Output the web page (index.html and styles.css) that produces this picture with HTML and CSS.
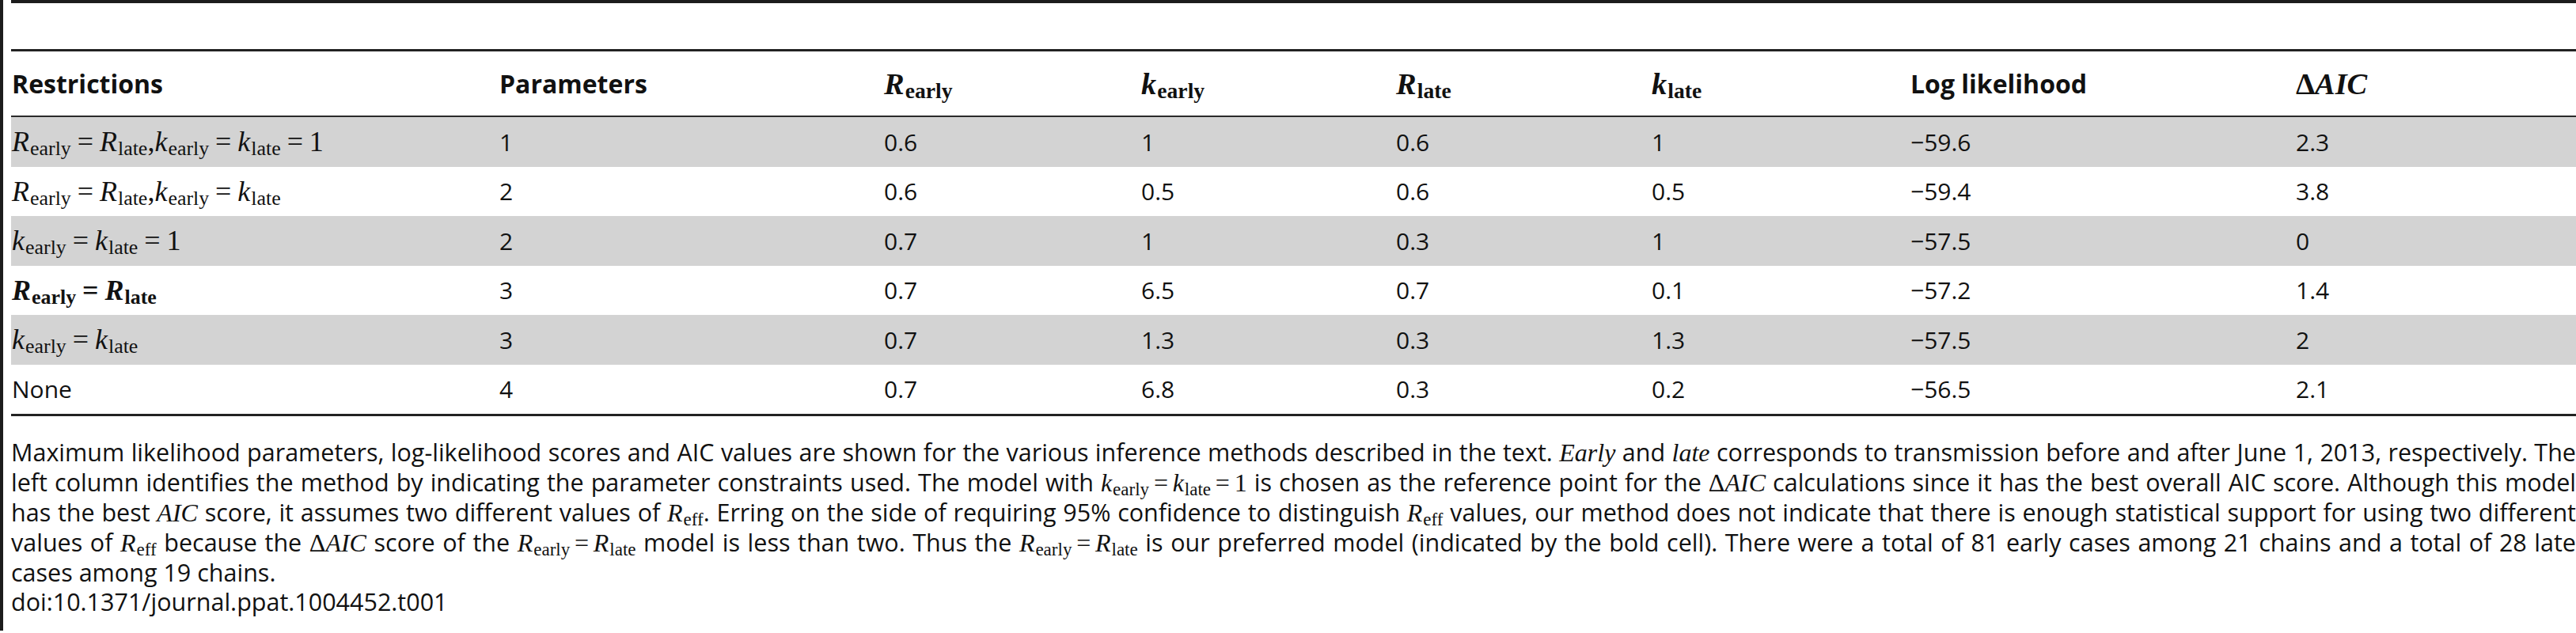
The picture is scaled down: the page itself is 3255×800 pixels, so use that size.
FILE: index.html
```html
<!DOCTYPE html>
<html>
<head>
<meta charset="utf-8">
<link rel="stylesheet" href="styles.css">
</head>
<body>
<div class="frame">
  <div class="topbar"></div>
  <table class="tbl">
    <colgroup>
      <col class="c1"><col class="c2"><col class="c3"><col class="c4"><col class="c5"><col class="c6"><col class="c7"><col class="c8">
    </colgroup>
    <thead>
      <tr>
        <th>Restrictions</th>
        <th>Parameters</th>
        <th><span class="m b"><i>R</i><sub>early</sub></span></th>
        <th><span class="m b"><i>k</i><sub>early</sub></span></th>
        <th><span class="m b"><i>R</i><sub>late</sub></span></th>
        <th><span class="m b"><i>k</i><sub>late</sub></span></th>
        <th>Log likelihood</th>
        <th><span class="m b">Δ<i>AIC</i></span></th>
      </tr>
    </thead>
    <tbody>
      <tr class="shade">
        <td><span class="m"><i>R</i><sub>early</sub><span class="eq">=</span><i>R</i><sub>late</sub>,<i>k</i><sub>early</sub><span class="eq">=</span><i>k</i><sub>late</sub><span class="eq">=</span>1</span></td>
        <td>1</td><td>0.6</td><td>1</td><td>0.6</td><td>1</td><td>−59.6</td><td>2.3</td>
      </tr>
      <tr>
        <td><span class="m"><i>R</i><sub>early</sub><span class="eq">=</span><i>R</i><sub>late</sub>,<i>k</i><sub>early</sub><span class="eq">=</span><i>k</i><sub>late</sub></span></td>
        <td>2</td><td>0.6</td><td>0.5</td><td>0.6</td><td>0.5</td><td>−59.4</td><td>3.8</td>
      </tr>
      <tr class="shade">
        <td><span class="m"><i>k</i><sub>early</sub><span class="eq">=</span><i>k</i><sub>late</sub><span class="eq">=</span>1</span></td>
        <td>2</td><td>0.7</td><td>1</td><td>0.3</td><td>1</td><td>−57.5</td><td>0</td>
      </tr>
      <tr>
        <td><span class="m b"><i>R</i><sub>early</sub><span class="eq">=</span><i>R</i><sub>late</sub></span></td>
        <td>3</td><td>0.7</td><td>6.5</td><td>0.7</td><td>0.1</td><td>−57.2</td><td>1.4</td>
      </tr>
      <tr class="shade">
        <td><span class="m"><i>k</i><sub>early</sub><span class="eq">=</span><i>k</i><sub>late</sub></span></td>
        <td>3</td><td>0.7</td><td>1.3</td><td>0.3</td><td>1.3</td><td>−57.5</td><td>2</td>
      </tr>
      <tr>
        <td>None</td>
        <td>4</td><td>0.7</td><td>6.8</td><td>0.3</td><td>0.2</td><td>−56.5</td><td>2.1</td>
      </tr>
    </tbody>
  </table>
  <p class="caption">Maximum likelihood parameters, log-likelihood scores and AIC values are shown for the various inference methods described in the text. <span class="m"><i>Early</i></span> and <span class="m"><i>late</i></span> corresponds to transmission before and after June 1, 2013, respectively. The left column identifies the method by indicating the parameter constraints used. The model with <span class="m"><i>k</i><sub>early</sub><span class="eq">=</span><i>k</i><sub>late</sub><span class="eq">=</span>1</span> is chosen as the reference point for the <span class="m">Δ<i>AIC</i></span> calculations since it has the best overall AIC score. Although this model has the best <span class="m"><i>AIC</i></span> score, it assumes two different values of <span class="m"><i>R</i><sub>eff</sub></span>. Erring on the side of requiring 95% confidence to distinguish <span class="m"><i>R</i><sub>eff</sub></span> values, our method does not indicate that there is enough statistical support for using two different values of <span class="m"><i>R</i><sub>eff</sub></span> because the <span class="m">Δ<i>AIC</i></span> score of the <span class="m"><i>R</i><sub>early</sub><span class="eq">=</span><i>R</i><sub>late</sub></span> model is less than two. Thus the <span class="m"><i>R</i><sub>early</sub><span class="eq">=</span><i>R</i><sub>late</sub></span> is our preferred model (indicated by the bold cell). There were a total of 81 early cases among 21 chains and a total of 28 late cases among 19 chains.</p>
  <p class="doi">doi:10.1371/journal.ppat.1004452.t001</p>
</div>
</body>
</html>
```

FILE: styles.css
```css
html, body {
  margin: 0;
  padding: 0;
  background: #ffffff;
}
body {
  font-family: "Open Sans", "Liberation Sans", sans-serif;
  color: #111111;
  width: 3255px;
  overflow: hidden;
}
.frame {
  border-left: 4px solid #1c1c1c;
  padding-left: 10px;
  padding-bottom: 18px;
}
.topbar {
  height: 4px;
  background: #1c1c1c;
  margin-bottom: 58px;
}
.tbl {
  width: 3241px;
  table-layout: fixed;
  border-collapse: collapse;
  border-top: 3px solid #222222;
  border-bottom: 3px solid #222222;
}
.c1 { width: 616px; }
.c2 { width: 486px; }
.c3 { width: 325px; }
.c4 { width: 322px; }
.c5 { width: 323px; }
.c6 { width: 327px; }
.c7 { width: 487px; }
.c8 { width: 355px; }
.tbl th, .tbl td {
  text-align: left;
  vertical-align: middle;
  padding: 0 0 0 1px;
  white-space: nowrap;
}
.tbl th {
  height: 81px;
  font-size: 32px;
  font-weight: 700;
  border-bottom: 2px solid #2a2a2a;
}
.tbl td {
  height: 62.5px;
  font-size: 30px;
  font-weight: 400;
}
.shade td {
  background: #d3d3d3;
}
.m {
  font-family: "Liberation Serif", "Times New Roman", serif;
  font-size: 1.2em;
  font-weight: 400;
  white-space: nowrap;
}
.m i {
  font-style: italic;
}
.m sub {
  font-size: 0.72em;
  vertical-align: -0.2em;
  line-height: 0;
  margin-left: 0.04em;
}
.m.b {
  font-weight: 700;
}
.eq {
  margin: 0 0.22em;
}
.caption {
  margin: 27px 0 0 0;
  font-size: 30.5px;
  line-height: 37px;
  text-align: justify;
}
.caption .m {
  font-size: 1.05em;
}
.caption .eq {
  margin: 0 0.18em;
}
.doi {
  margin: 0;
  font-size: 30.5px;
  line-height: 37px;
}
```
